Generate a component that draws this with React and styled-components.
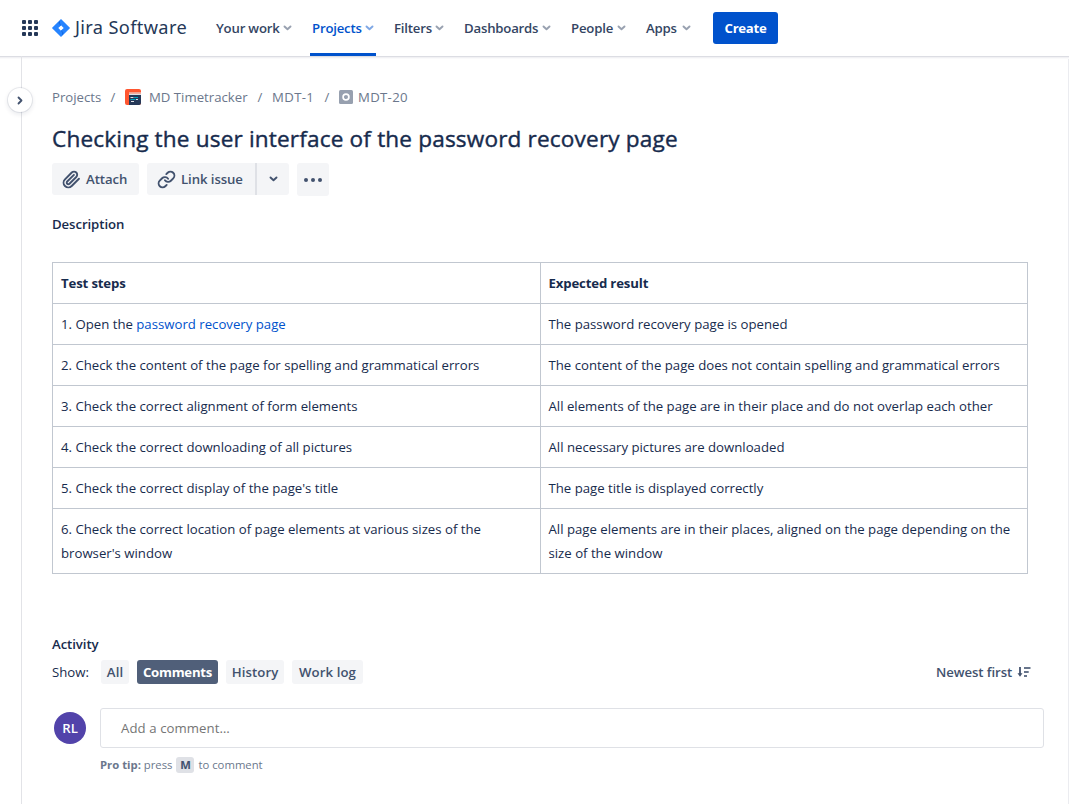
import React from "react";
import styled, { createGlobalStyle } from "styled-components";

const Global = createGlobalStyle`
  * { box-sizing: border-box; }
  body {
    margin: 0;
    background: #fff;
    color: #172b4d;
    font-family: "Open Sans", "Noto Sans", sans-serif;
    font-size: 13.2px;
    line-height: 20px;
    overflow: hidden;
  }
  button { font: inherit; border: 0; padding: 0; cursor: pointer; white-space: nowrap; }
`;

const Page = styled.div`
  display: flex;
  flex-direction: column;
  height: 804px;
`;
const Header = styled.header`
  position: relative;
  display: flex;
  align-items: center;
  height: 56px;
  flex: none;
  padding-left: 22px;
  box-shadow: 0 1px 0 #dcdde3, 0 2px 0 #f1f1f4, 0 3px 0 #fafafb;
`;
const Brand = styled.div`
  display: flex;
  align-items: center;
  width: 162px;
  margin-left: 14px;
  font-family: "Noto Sans", sans-serif;
  font-size: 18.2px;
  color: #253858;
  letter-spacing: 0.35px;
  white-space: nowrap;
  svg { margin-right: 5px; flex: none; }
  span { position: relative; top: -1px; }
`;
const Nav = styled.nav`
  display: flex;
  height: 56px;
`;
const NavItem = styled.a`
  display: flex;
  align-items: center;
  justify-content: space-between;
  width: ${(p) => p.$width}px;
  padding: 0 2px;
  margin-right: 16px;
  font-weight: 600;
  white-space: nowrap;
  letter-spacing: -0.2px;
  color: ${(p) => (p.$active ? "#0052cc" : "#344563")};
  box-shadow: ${(p) => (p.$active ? "inset 0 -3px 0 #0052cc" : "none")};
  svg { opacity: 0.5; flex: none; }
`;
const CreateButton = styled.button`
  width: 65px;
  height: 32px;
  margin-left: 4px;
  border-radius: 3px;
  background: #0052cc;
  color: #fff;
  font-weight: 700;
  letter-spacing: -0.3px;
`;
const Body = styled.div`
  display: flex;
  flex: 1;
`;
const Rail = styled.aside`
  position: relative;
  width: 22px;
  flex: none;
  border-right: 1px solid #e2e3e7;
`;
const RailToggle = styled.button`
  position: absolute;
  top: 32px;
  left: 8px;
  display: grid;
  place-items: center;
  width: 24px;
  height: 24px;
  border-radius: 50%;
  background: #fff;
  color: #42526e;
  box-shadow: 0 0 0 1px rgba(9, 30, 66, 0.08), 0 2px 4px 1px rgba(9, 30, 66, 0.08);
`;
const Main = styled.main`
  flex: 1;
  padding: 31px 0 0 30px;
  border-right: 1px solid #ebecf0;
`;
const Crumbs = styled.div`
  display: flex;
  align-items: center;
  height: 20px;
  color: #6b778c;
  white-space: nowrap;
`;
const Crumb = styled.span`
  display: flex;
  align-items: center;
  width: ${(p) => p.$width}px;
  letter-spacing: ${(p) => p.$tracking || 0}px;
  svg { margin-right: ${(p) => p.$gap}px; flex: none; }
`;
const Slash = styled.span`
  width: 24px;
  text-align: center;
`;
const Title = styled.h1`
  margin: 18px 0 10px;
  font-size: 22.6px;
  line-height: 28px;
  font-weight: 400;
  letter-spacing: 0.16px;
  -webkit-text-stroke: 0.4px currentColor;
  white-space: nowrap;
`;
const Actions = styled.div`
  display: flex;
  gap: 8px;
  height: 32px;
`;
const Action = styled.button`
  display: flex;
  align-items: center;
  justify-content: ${(p) => (p.$center ? "center" : "flex-start")};
  width: ${(p) => p.$width}px;
  height: ${(p) => p.$height || 32}px;
  padding-left: ${(p) => (p.$center ? 0 : 10)}px;
  gap: 5px;
  border-radius: 3px;
  background: #f4f5f7;
  color: #42526e;
  font-weight: 600;
  letter-spacing: -0.08px;
`;
const Split = styled.div`
  display: flex;
  ${Action}:first-child { border-radius: 3px 0 0 3px; }
  ${Action}:last-child { border-radius: 0 3px 3px 0; border-left: 2px solid #dfe1e6; }
`;
const Heading = styled.h2`
  margin: ${(p) => p.$top}px 0 0;
  font-size: 13.2px;
  line-height: 20px;
  font-weight: 600;
  letter-spacing: -0.08px;
`;
const Table = styled.table`
  width: 976px;
  margin-top: 28px;
  border-collapse: collapse;
  table-layout: fixed;
  line-height: 24px;
`;
const Cell = styled.td`
  border: 1px solid #c1c7d0;
  padding: 8px;
  text-align: left;
  vertical-align: top;
  font-weight: ${(p) => (p.$head ? 700 : 400)};
  letter-spacing: ${(p) => (p.$head ? "-0.15px" : "normal")};
  white-space: nowrap;
`;
const Link = styled.a`
  color: #0052cc;
`;
const Filters = styled.div`
  display: flex;
  align-items: center;
  gap: 8px;
  margin-top: 6px;
  height: 24px;
`;
const Label = styled.span`
  width: 41px;
`;
const Tab = styled.button`
  width: ${(p) => p.$width}px;
  height: 24px;
  border-radius: 3px;
  background: ${(p) => (p.$active ? "#505f79" : "#f4f5f7")};
  color: ${(p) => (p.$active ? "#fff" : "#42526e")};
  font-weight: ${(p) => (p.$active ? 700 : 600)};
  letter-spacing: ${(p) => (p.$active ? "-0.25px" : "0.1px")};
`;
const Sort = styled.button`
  display: flex;
  align-items: center;
  justify-content: space-between;
  width: 95px;
  margin-left: auto;
  margin-right: 37px;
  background: none;
  color: #42526e;
  font-weight: 600;
  letter-spacing: -0.08px;
`;
const CommentRow = styled.div`
  display: flex;
  align-items: center;
  margin: 24px 24px 0 2px;
`;
const Avatar = styled.div`
  display: grid;
  place-items: center;
  width: 32px;
  height: 32px;
  margin-right: 14px;
  border-radius: 50%;
  background: #5243aa;
  color: #fff;
  font-weight: 600;
`;
const CommentBox = styled.div`
  flex: 1;
  height: 40px;
  padding: 9px 20px;
  border: 1px solid #dfe1e6;
  border-radius: 3px;
  color: #757575;
  letter-spacing: 0.08px;
`;
const Tip = styled.div`
  display: flex;
  align-items: center;
  height: 16px;
  margin: 9px 0 0 48px;
  font-size: 11.3px;
  color: #6b778c;
  white-space: pre;
`;
const Key = styled.kbd`
  width: 18px;
  margin: 0 4px;
  border-radius: 3px;
  background: #dfe1e6;
  color: #42526e;
  font: 700 11.3px/16px "Open Sans", sans-serif;
  text-align: center;
`;

const Stroke = ({ w, h, d, sw = 2, vb }) => (
  <svg width={w} height={h} viewBox={vb || `0 0 ${w} ${h}`} fill="none" stroke="currentColor" strokeWidth={sw} strokeLinecap="round" strokeLinejoin="round">
    <path d={d} />
  </svg>
);
const ChevronDown = () => <Stroke w={9} h={6} sw={1.9} d="M1.5 1.500 4.500 4.300 7.500 1.500" />;

const Grid = () => (
  <svg width="16" height="16" fill="#253858">
    {[0, 6, 12].map((y) => [0, 6, 12].map((x) => <rect key={`${x}-${y}`} x={x} y={y} width="4" height="4" rx="1" />))}
  </svg>
);
const JiraMark = () => (
  <svg width="18" height="18" viewBox="0 0 18 18">
    <defs>
      <linearGradient id="up" x1="0.9" y1="0.1" x2="0.4" y2="0.7"><stop offset="0.1" stopColor="#0052cc" /><stop offset="1" stopColor="#2684ff" /></linearGradient>
      <linearGradient id="dn" x1="0.1" y1="0.9" x2="0.6" y2="0.3"><stop offset="0.1" stopColor="#0052cc" /><stop offset="1" stopColor="#2684ff" /></linearGradient>
    </defs>
    <path d="M9 0 17.600 8.400a.8.8 0 0 1 0 1.200L9 18 .4 9.600a.8.8 0 0 1 0-1.200ZM9 6.300 6.300 9 9 11.700 11.700 9Z" fill="#2684ff" fillRule="evenodd" />
    <path d="M9 6.300A4.400 4.400 0 0 1 8 2L5.500 4.500 7.600 7.700Z" fill="url(#up)" />
    <path d="M9 11.700A4.400 4.400 0 0 1 10 16L12.500 13.500 10.400 10.300Z" fill="url(#dn)" />
  </svg>
);
const ProjectIcon = () => (
  <svg width="16" height="16" viewBox="0 0 16 16">
    <rect width="16" height="16" rx="2" fill="#ff5630" />
    <path d="M4 3.500h12v3H4z" fill="#dfe1e6" />
    <path d="M4 3.500h12v1.300H4z" fill="#f7a08c" />
    <path d="M4 6h12v8a2 2 0 0 1-2 2H4z" fill="#253858" />
    <path d="M5.500 8.500h3M11 10.500h2M6 12.500h3" stroke="#dfe1e6" />
    <path d="M9 8.500h4M5.500 10.500h5" stroke="#00a3bf" />
  </svg>
);
const IssueIcon = () => (
  <svg width="14" height="14"><rect width="14" height="14" rx="1.5" fill="#97a0af" /><circle cx="7" cy="7" r="2.9" fill="none" stroke="#fff" strokeWidth="1.7" /></svg>
);
const SortIcon = () => (
  <svg width="14" height="12" fill="none" stroke="currentColor" strokeWidth="1.8">
    <path d="M3 1V9" />
    <path d="M7 2h6.500M7 6h4.700M7 10h3" opacity="0.8" />
    <path d="M.5 7.200h5L3 10.800Z" fill="currentColor" stroke="none" />
  </svg>
);

const NAV = [["Your work", 80], ["Projects", 66, true], ["Filters", 54], ["Dashboards", 91], ["People", 59], ["Apps", 49]];
const ROWS = [
  [<>1. Open the <Link>password recovery page</Link></>, "The password recovery page is opened"],
  ["2. Check the content of the page for spelling and grammatical errors", "The content of the page does not contain spelling and grammatical errors"],
  ["3. Check the correct alignment of form elements", "All elements of the page are in their place and do not overlap each other"],
  ["4. Check the correct downloading of all pictures", "All necessary pictures are downloaded"],
  ["5. Check the correct display of the page's title", "The page title is displayed correctly"],
  [<>6. Check the correct location of page elements at various sizes of the<br />browser's window</>, <>All page elements are in their places, aligned on the page depending on the<br />size of the window</>],
];

export default function App() {
  return (
    <Page>
      <Global />
      <Header>
        <Grid />
        <Brand><JiraMark /><span>Jira Software</span></Brand>
        <Nav>
          {NAV.map(([label, width, active]) => (
            <NavItem key={label} $width={width} $active={active}>{label}<ChevronDown /></NavItem>
          ))}
        </Nav>
        <CreateButton>Create</CreateButton>
      </Header>
      <Body>
        <Rail>
          <RailToggle><Stroke w={6} h={9} sw={1.8} d="M1.500 1.500 4.500 4.500 1.500 7.500" /></RailToggle>
        </Rail>
        <Main>
          <Crumbs>
            <Crumb $width={49}>Projects</Crumb><Slash>/</Slash>
            <Crumb $width={123} $gap={8}><ProjectIcon />MD Timetracker</Crumb><Slash>/</Slash>
            <Crumb $width={43} $tracking={0.35}>MDT-1</Crumb><Slash>/</Slash>
            <Crumb $width={70} $gap={5} $tracking={0.3}><IssueIcon />MDT-20</Crumb>
          </Crumbs>
          <Title>Checking the user interface of the password recovery page</Title>
          <Actions>
            <Action $width={87}>
              <Stroke w={19} h={19} vb="0 0 24 24" sw={2.4} d="m21.44 11.05-9.190 9.190a6 6 0 0 1-8.490-8.490l8.570-8.570A4 4 0 1 1 18 8.840l-8.590 8.570a2 2 0 0 1-2.830-2.830l8.490-8.480" />Attach
            </Action>
            <Split>
              <Action $width={108}>
                <Stroke w={19} h={19} vb="0 0 24 24" sw={2.4} d="M10 13a5 5 0 0 0 7.540.54l3-3a5 5 0 0 0-7.070-7.070l-1.720 1.710M14 11a5 5 0 0 0-7.540-.54l-3 3a5 5 0 0 0 7.070 7.070l1.710-1.710" />Link issue
              </Action>
              <Action $width={34} $center><ChevronDown /></Action>
            </Split>
            <Action $width={32} $height={33} $center>
              <svg width="18" height="4" fill="currentColor"><circle cx="2" cy="2" r="2" /><circle cx="9" cy="2" r="2" /><circle cx="16" cy="2" r="2" /></svg>
            </Action>
          </Actions>
          <Heading $top={19}>Description</Heading>
          <Table>
            <thead><tr><Cell as="th" $head>Test steps</Cell><Cell as="th" $head>Expected result</Cell></tr></thead>
            <tbody>{ROWS.map(([step, result], i) => <tr key={i}><Cell>{step}</Cell><Cell>{result}</Cell></tr>)}</tbody>
          </Table>
          <Heading $top={60}>Activity</Heading>
          <Filters>
            <Label>Show:</Label>
            <Tab $width={28}>All</Tab><Tab $width={81} $active>Comments</Tab><Tab $width={58}>History</Tab><Tab $width={71}>Work log</Tab>
            <Sort>Newest first<SortIcon /></Sort>
          </Filters>
          <CommentRow><Avatar>RL</Avatar><CommentBox>Add a comment…</CommentBox></CommentRow>
          <Tip><b>Pro tip:</b> press<Key>M</Key>to comment</Tip>
        </Main>
      </Body>
    </Page>
  );
}
